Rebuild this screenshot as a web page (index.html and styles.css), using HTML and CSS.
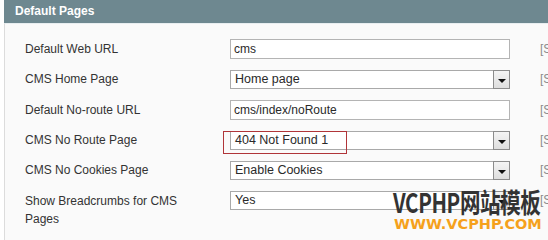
FILE: index.html
```html
<!DOCTYPE html>
<html>
<head>
<meta charset="utf-8">
<link rel="stylesheet" href="styles.css">
</head>
<body>
<div class="panel">
  <div class="panel-head">Default Pages</div>
  <div class="panel-body">
    <div class="row">
      <div class="label l-input">Default Web URL</div>
      <div class="field"><div class="input">cms</div></div>
      <div class="scope l-input">[STORE VIEW]</div>
    </div>
    <div class="row">
      <div class="label l-select">CMS Home Page</div>
      <div class="field"><div class="select"><span class="val">Home page</span><span class="btn"><span class="tri"></span></span></div></div>
      <div class="scope l-select">[STORE VIEW]</div>
    </div>
    <div class="row">
      <div class="label l-input">Default No-route URL</div>
      <div class="field"><div class="input">cms/index/noRoute</div></div>
      <div class="scope l-input">[STORE VIEW]</div>
    </div>
    <div class="row">
      <div class="label l-select">CMS No Route Page</div>
      <div class="field"><div class="select"><span class="val">404 Not Found 1</span><span class="btn"><span class="tri"></span></span></div><div class="highlight"></div></div>
      <div class="scope l-select">[STORE VIEW]</div>
    </div>
    <div class="row">
      <div class="label l-select">CMS No Cookies Page</div>
      <div class="field"><div class="select"><span class="val">Enable Cookies</span><span class="btn"><span class="tri"></span></span></div></div>
      <div class="scope l-select">[STORE VIEW]</div>
    </div>
    <div class="row">
      <div class="label l-multi">Show Breadcrumbs for CMS Pages</div>
      <div class="field"><div class="select"><span class="val">Yes</span><span class="btn"><span class="tri"></span></span></div></div>
      <div class="scope l-select">[STORE VIEW]</div>
    </div>
  </div>
</div>
<div class="watermark">
  <div class="wm-top">VCPHP网站模板</div>
  <div class="wm-bottom">WWW.VCPHP.COM</div>
</div>
</body>
</html>
```

FILE: styles.css
```css
html, body {
  margin: 0;
  padding: 0;
  background: #ffffff;
  overflow: hidden;
}
body {
  width: 548px;
  height: 240px;
  position: relative;
  font-family: "Liberation Sans", Arial, sans-serif;
  font-size: 12px;
  color: #303030;
}
.panel {
  margin-left: 4px;
  height: 240px;
  display: flex;
  flex-direction: column;
}
.panel-head {
  height: 23px;
  line-height: 23px;
  background: #6e8890;
  color: #ffffff;
  font-weight: bold;
  font-size: 12px;
  padding-left: 11px;
}
.panel-body {
  flex: 1;
  background: #fafafa;
  border-left: 1px solid #dcdcdc;
  border-top: 1px solid #e8eef0;
  padding: 15px 0 0 20px;
  display: flex;
  flex-direction: column;
  gap: 11px;
  overflow: hidden;
}
.row {
  display: grid;
  grid-template-columns: 205px 280px auto;
  align-items: start;
}
.label {
  color: #333333;
}
.l-input { line-height: 20px; }
.l-select { line-height: 19px; }
.l-multi { line-height: 18px; padding-top: 1px; padding-right: 30px; }
.scope {
  color: #8a8a8a;
  white-space: nowrap;
  margin-left: 30px;
  overflow: hidden;
}
.field {
  position: relative;
}
.input {
  box-sizing: border-box;
  height: 20px;
  line-height: 18px;
  border: 1px solid #b4b4b4;
  background: #ffffff;
  padding-left: 3px;
  color: #2a2a2a;
}
.select {
  box-sizing: border-box;
  height: 19px;
  border: 1px solid #a9a9a9;
  background: #ffffff;
  display: flex;
  align-items: stretch;
  color: #2a2a2a;
}
.select .val {
  flex: 1;
  line-height: 17px;
  padding-left: 4px;
  font-size: 12.5px;
}
.select .btn {
  width: 15px;
  border: 1px solid #8c8c8c;
  background: linear-gradient(#f4f4f4, #dedede);
  display: flex;
  align-items: center;
  justify-content: center;
  margin: -1px -1px -1px 0;
}
.tri {
  width: 0;
  height: 0;
  border-left: 4px solid transparent;
  border-right: 4px solid transparent;
  border-top: 4px solid #111111;
  margin-top: 2px;
}
.highlight {
  position: absolute;
  left: -7px;
  top: 0;
  width: 122px;
  height: 21px;
  border: 1px solid #b03539;
}
.watermark {
  position: absolute;
  left: 393px;
  top: 188px;
  width: 155px;
}
.wm-top {
  font-family: "Noto Sans CJK SC", sans-serif;
  font-weight: bold;
  font-size: 27px;
  line-height: 28px;
  color: #333333;
  white-space: nowrap;
  transform: scaleX(0.76);
  transform-origin: left top;
  letter-spacing: -0.5px;
}
.wm-bottom {
  font-family: "DejaVu Sans", sans-serif;
  font-weight: bold;
  font-size: 14.5px;
  line-height: 16px;
  color: #f5a11c;
  white-space: nowrap;
  margin-left: 1px;
}
```
